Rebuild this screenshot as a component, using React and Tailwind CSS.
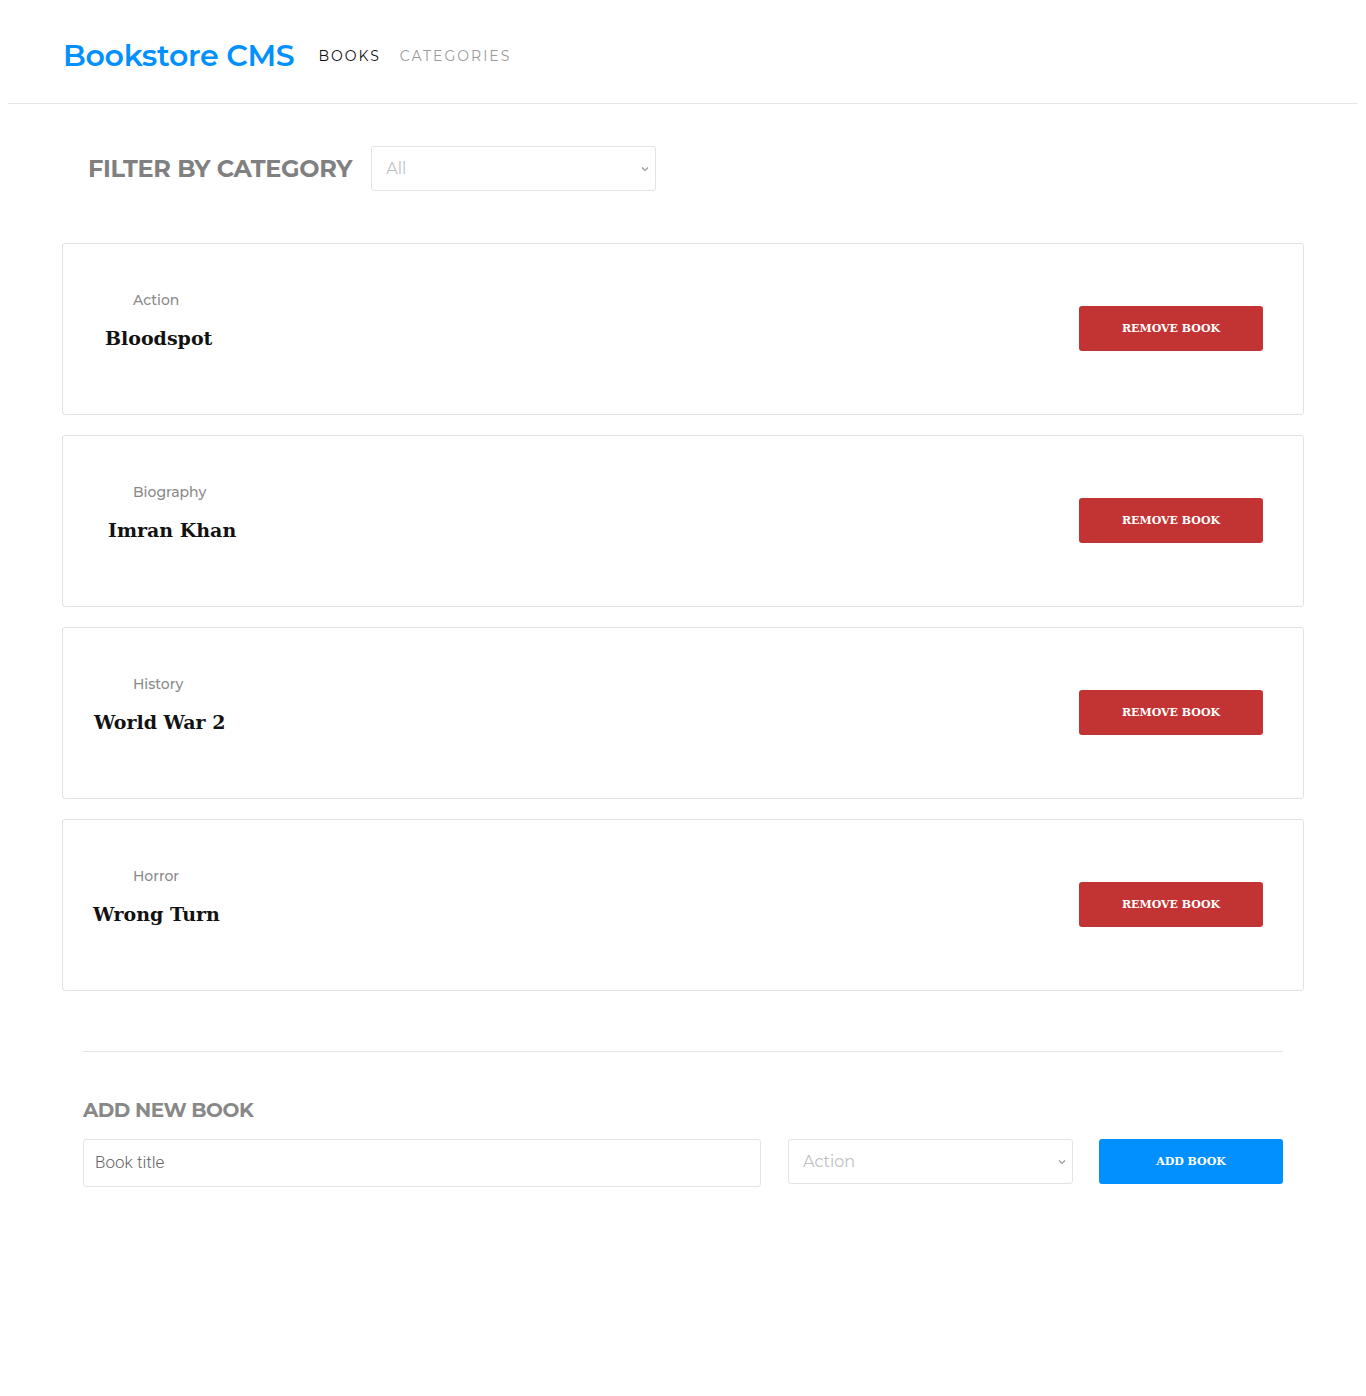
import React from "react";

const books = [
  { id: 1, category: "Action", title: "Bloodspot", offset: "ml-[42px]" },
  { id: 2, category: "Biography", title: "Imran Khan", offset: "ml-[45px]" },
  { id: 3, category: "History", title: "World War 2", offset: "ml-[31px]" },
  { id: 4, category: "Horror", title: "Wrong Turn", offset: "ml-[30px]" },
];

const sans = "font-['Montserrat','Inter','Open_Sans',sans-serif]";
const serif = "font-['Roboto_Slab','DejaVu_Serif',serif]";

const Chevron = () => (
  <svg width="10" height="10" viewBox="0 0 10 10" className="text-[#999]">
    <path d="M2 3.5 L5 6.5 L8 3.5" fill="none" stroke="currentColor" strokeWidth="1.2" />
  </svg>
);

const App = () => {
  return (
    <div className={`min-h-[1396px] bg-white ${sans}`}>
      <header className="mx-2 flex items-center gap-6 border-b border-[#e6e6e6] pl-[55px] pt-[37px] pb-[28px]">
        <h1 className="text-[30px] font-semibold tracking-[-0.3px] text-[#0290ff] leading-[38px]">
          Bookstore CMS
        </h1>
        <nav className="flex items-center gap-[19px] pt-[1px] text-[14px] tracking-[2px]">
          <span className="text-[#121212]">BOOKS</span>
          <span className="text-[#9a9a9a]">CATEGORIES</span>
        </nav>
      </header>

      <div className="flex items-center gap-[19px] pl-[88px] pt-[42px]">
        <h2 className="text-[24px] font-bold tracking-[-0.3px] text-[#808080]">
          FILTER BY CATEGORY
        </h2>
        <div className="flex h-[45px] w-[285px] items-center justify-between rounded-[3px] border border-[#e3e3e3] pl-[14px] pr-[5px]">
          <span className="text-[16px] text-[#c0c0c0]">All</span>
          <Chevron />
        </div>
      </div>

      <div className="mx-[62px] mt-[52px] flex flex-col gap-[20px]">
        {books.map((book) => (
          <div
            key={book.id}
            className="flex h-[172px] items-start justify-between rounded-[3px] border border-[#e2e2e2] pr-[40px] pt-[46px]"
          >
            <div className="flex flex-col">
              <span className="ml-[70px] text-[14px] leading-[20px] font-medium text-[#8a8a8a]">{book.category}</span>
              <span className={`${book.offset} mt-[15px] text-[19px] leading-[26px] font-bold text-[#121212] ${serif}`}>
                {book.title}
              </span>
            </div>
            <button
              className={`mt-[16px] h-[45px] w-[184px] rounded-[3px] bg-[#c23434] pt-[2px] text-[11px] font-bold text-white ${serif}`}
            >
              REMOVE BOOK
            </button>
          </div>
        ))}
      </div>

      <div className="mx-[83px] mt-[60px] border-t border-[#e6e6e6] pt-[43px]">
        <h2 className="text-[20px] font-bold tracking-[-0.5px] text-[#888]">ADD NEW BOOK</h2>
        <div className="mt-[14px] flex items-start">
          <div className="flex h-[48px] w-[678px] items-center rounded-[3px] border border-[#e3e3e3] pl-[11px]">
            <span className="text-[17px] font-light text-[#666] font-['Roboto',sans-serif]">Book title</span>
          </div>
          <div className="ml-[27px] flex h-[45px] w-[285px] items-center justify-between rounded-[3px] border border-[#e3e3e3] pl-[14px] pr-[5px]">
            <span className="text-[16px] text-[#c0c0c0]">Action</span>
            <Chevron />
          </div>
          <button
            className={`ml-[26px] h-[45px] w-[184px] rounded-[3px] bg-[#0290ff] pt-[2px] text-[11px] font-bold text-white ${serif}`}
          >
            ADD BOOK
          </button>
        </div>
      </div>
    </div>
  );
};

export default App;
